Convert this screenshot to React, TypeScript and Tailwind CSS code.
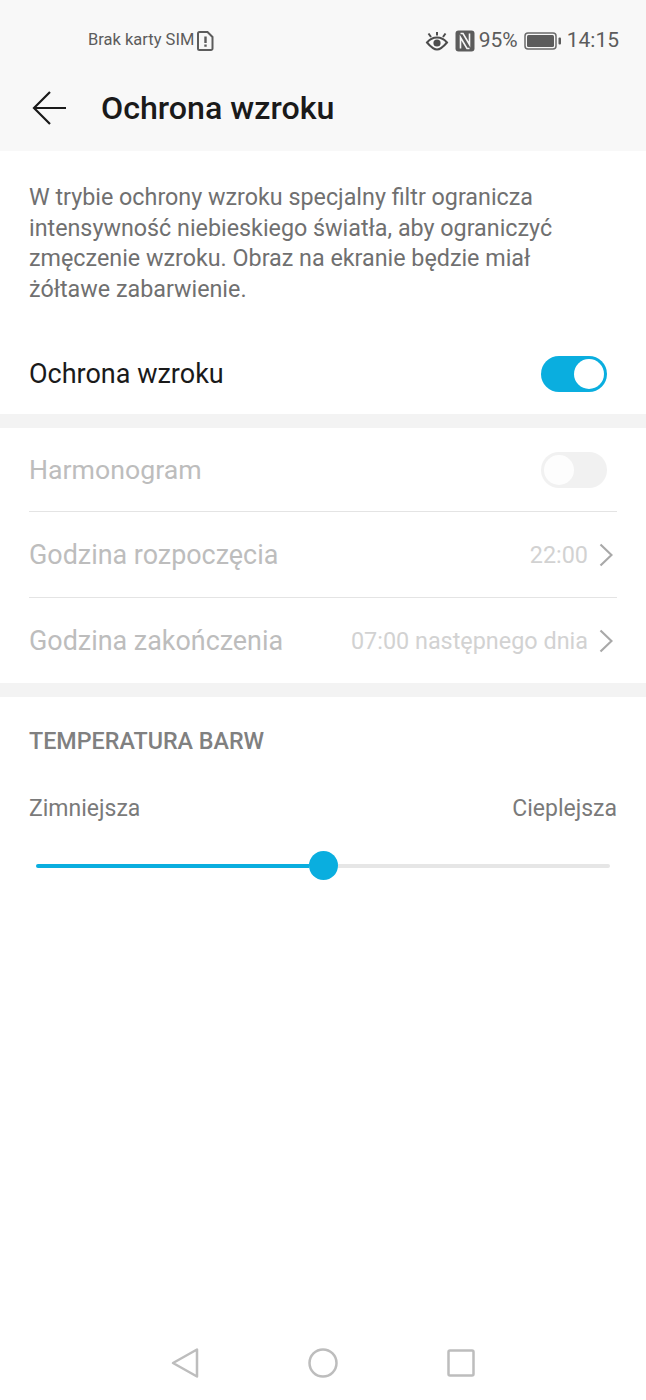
function Toggle({ on }: { on: boolean }) {
  return (
    <div
      className={`flex h-[36px] w-[66px] items-center rounded-full p-[3px] ${
        on ? "justify-end bg-[#0aaedf]" : "justify-start bg-[#f1f1f1]"
      }`}
    >
      <div className={`h-[30px] w-[30px] rounded-full ${on ? "bg-white" : "bg-[#fdfdfd]"}`} />
    </div>
  )
}

function Chevron() {
  return (
    <svg width="14" height="24" viewBox="0 0 14 24" fill="none" className="mr-[4px]">
      <path d="M1.500 1.500L12.500 12 1.500 22.500" stroke="#a9a9a9" strokeWidth="2.200" />
    </svg>
  )
}

function StatusBar() {
  return (
    <div className="flex h-[80px] items-center justify-between pl-[88px] pr-[27px] pt-[1px] text-[#5c5c5c]">
      <div className="flex items-center gap-[3px]">
        <span className="text-[16.500px] leading-none">Brak karty SIM</span>
        <svg width="17" height="20" viewBox="0 0 17 20" fill="none">
          <path
            d="M2.500 1h8l5 5v11.500a1.500 1.500 0 0 1-1.500 1.500H2.500a1.500 1.500 0 0 1-1.500-1.500V2.500A1.500 1.500 0 0 1 2.500 1z"
            stroke="#5c5c5c"
            strokeWidth="2"
          />
          <path d="M8.500 5.500v6.500M8.500 13.500v2.200" stroke="#5c5c5c" strokeWidth="2.400" />
        </svg>
      </div>
      <div className="flex items-center">
        <svg width="24" height="20" viewBox="0 0 24 20" fill="none" className="mr-[6px]">
          <path d="M2 11.500C5 8 8.200 6.500 12 6.500s7 1.500 10 5c-3 3.500-6.200 7-10 7s-7-3.500-10-7z" stroke="#4c4c4c" strokeWidth="2" />
          <circle cx="12" cy="12" r="3.600" fill="#4c4c4c" />
          <path d="M3.500 2.500l2.500 3.500M12 1v3.500M20.500 2.500L18 6" stroke="#4c4c4c" strokeWidth="2" />
        </svg>
        <svg width="20" height="22" viewBox="0 0 20 22" className="mr-[4px]">
          <rect x="0.500" y="0.500" width="19" height="21" rx="3" fill="#5c5c5c" />
          <path d="M5.500 3.500h2.500l6.500 11V3.500M14.500 18.500H12L5.500 7.500v11" stroke="#f8f8f8" strokeWidth="1.600" fill="none" />
        </svg>
        <span className="mr-[6px] text-[21px] leading-none">95%</span>
        <svg width="37" height="20" viewBox="0 0 37 20" className="mr-[6px]">
          <rect x="1" y="2" width="31" height="16" rx="3" fill="none" stroke="#6a6a6a" strokeWidth="1.500" />
          <rect x="3" y="4" width="27" height="12" rx="1.500" fill="#5c5c5c" />
          <rect x="34.500" y="6.500" width="2.500" height="7" rx="1" fill="#5c5c5c" />
        </svg>
        <span className="text-[21px] leading-none">14:15</span>
      </div>
    </div>
  )
}

function Row({ label, value }: { label: string; value: string }) {
  return (
    <div className="flex h-[85px] items-center justify-between pt-[2px]">
      <span className="text-[26.900px] text-[#bdbdbd]">{label}</span>
      <div className="flex items-center gap-[11px]">
        <span className="text-[23.400px] text-[#d2d2d2]">{value}</span>
        <Chevron />
      </div>
    </div>
  )
}

export default function App() {
  return (
    <div className="flex h-[1400px] w-[646px] flex-col overflow-hidden bg-white font-['Roboto',sans-serif]">
      <div className="h-[151px] bg-[#f8f8f8]">
        <StatusBar />
        <div className="flex h-[56px] items-center pl-[32px]">
          <svg width="36" height="36" viewBox="0 0 36 36" fill="none" className="mr-[33px]">
            <path d="M34 18H2M18 2L2 18l16 16" stroke="#1a1a1a" strokeWidth="2.200" />
          </svg>
          <span className="text-[32.200px] font-medium leading-none text-[#1a1a1a]">Ochrona wzroku</span>
        </div>
      </div>

      <p className="px-[29px] pt-[31px] text-[23.300px] leading-[30.670px] text-[#707070]">
        W trybie ochrony wzroku specjalny filtr ogranicza intensywność niebieskiego światła, aby ograniczyć
        zmęczenie wzroku. Obraz na ekranie będzie miał żółtawe zabarwienie.
      </p>

      <div className="flex h-[109.320px] items-center justify-between pl-[29px] pr-[39px] pt-[29px]">
        <span className="text-[27px] text-[#1a1a1a]">Ochrona wzroku</span>
        <Toggle on />
      </div>

      <div className="h-[14px] bg-[#f3f3f3]" />

      <div className="px-[29px]">
        <div className="flex h-[84px] items-center justify-between border-b border-[#e4e4e4] pr-[10px]">
          <span className="pt-[2px] text-[26.700px] text-[#bdbdbd]">Harmonogram</span>
          <Toggle on={false} />
        </div>
        <div className="border-b border-[#e4e4e4]">
          <Row label="Godzina rozpoczęcia" value="22:00" />
        </div>
        <Row label="Godzina zakończenia" value="07:00 następnego dnia" />
      </div>

      <div className="h-[14px] bg-[#f3f3f3]" />

      <div className="px-[29px]">
        <div className="flex h-[86px] items-center pt-[3px] text-[23.300px] font-medium text-[#808080]">TEMPERATURA BARW</div>
        <div className="flex items-center justify-between pt-[3px] text-[23px] leading-[46px] text-[#7a7a7a]">
          <span>Zimniejsza</span>
          <span>Cieplejsza</span>
        </div>
        <div className="mt-[19px] flex items-center px-[7px]">
          <div className="h-[4px] flex-1 rounded-l-full bg-[#0aaedf]" />
          <div className="h-[29px] w-[29px] rounded-full bg-[#0aaedf]" />
          <div className="h-[4px] flex-1 rounded-r-full bg-[#e6e6e6]" />
        </div>
      </div>

      <div className="mt-auto flex h-[74px] items-start justify-center gap-[109px] pt-[21px]">
        <svg width="28" height="32" viewBox="0 0 28 32" fill="none">
          <path d="M26 2.500v27L2 16z" stroke="#bdbdbd" strokeWidth="2.500" strokeLinejoin="round" />
        </svg>
        <svg width="30" height="32" viewBox="0 0 30 32" fill="none">
          <circle cx="15" cy="16" r="13.500" stroke="#bdbdbd" strokeWidth="2.500" />
        </svg>
        <svg width="28" height="32" viewBox="0 0 28 32" fill="none">
          <rect x="1.500" y="3.500" width="25" height="25" rx="1.500" stroke="#bdbdbd" strokeWidth="2.500" />
        </svg>
      </div>
    </div>
  )
}
